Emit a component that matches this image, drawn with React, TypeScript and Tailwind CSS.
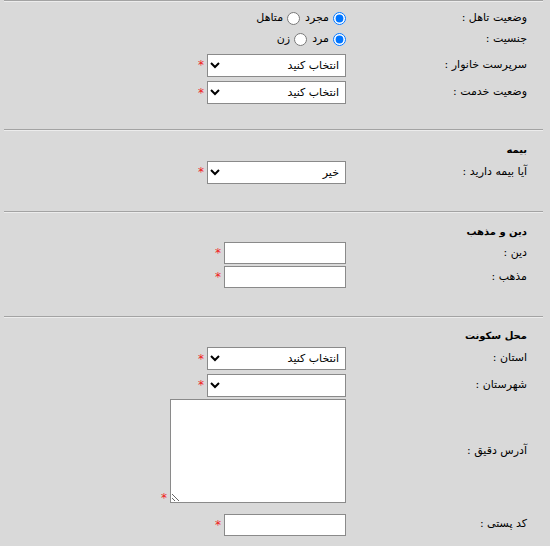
import React from 'react';

const font = { fontFamily: 'Tahoma, "DejaVu Sans", sans-serif' };

function Star() {
  return <span className="text-[12px] leading-none text-[#f02020]">*</span>;
}

function Divider() {
  return <div className="h-0 border-t border-b border-t-[#a3a3a3] border-b-[#ececec]" />;
}

function Row({
  label,
  children,
  h = 'h-[26px]',
  end = false,
}: {
  label: string;
  children: React.ReactNode;
  h?: string;
  end?: boolean;
}) {
  return (
    <div className={`flex ${h}`}>
      <div className="flex w-[197px] shrink-0 items-center pr-[16px] text-[11px]">{label}</div>
      <div className={`flex gap-[3px] ${end ? 'items-end' : 'items-center'}`}>{children}</div>
    </div>
  );
}

function Select({ value }: { value?: string }) {
  return (
    <select
      className="h-[23px] w-[139px] border border-[#8a8a8a] bg-white pr-[2px] text-[11px] text-black"
      defaultValue={value ?? ''}
    >
      <option value={value ?? ''}>{value ?? ''}</option>
    </select>
  );
}

function TextInput() {
  return <input type="text" className="h-[22px] w-[122px] border border-[#8a8a8a] bg-white px-1 text-[11px]" />;
}

function Radios({ a, b, name }: { a: string; b: string; name: string }) {
  return (
    <div className="flex items-center text-[11px]">
      <label className="flex items-center gap-[4px]">
        <input type="radio" name={name} defaultChecked className="m-0 h-[13px] w-[13px]" />
        <span>{a}</span>
      </label>
      <label className="mr-[5px] flex items-center gap-[4px]">
        <input type="radio" name={name} className="m-0 h-[13px] w-[13px]" />
        <span>{b}</span>
      </label>
    </div>
  );
}

function Header({ text }: { text: string }) {
  return (
    <div className="flex h-[20px] items-center pr-[16px] text-[10px] font-bold">{text}</div>
  );
}

export default function App() {
  return (
    <div dir="rtl" className="min-h-[546px] w-[550px] bg-[#d9d9d9] text-black" style={font}>
      <div className="pl-[4px] pr-[7px]">
        <Divider />
        <div className="pt-[6px] pb-[24px]">
          <Row label="وضعیت تاهل :" h="h-[20px]">
            <Radios name="marital" a="مجرد" b="متاهل" />
          </Row>
          <Row label="جنسیت :" h="h-[22px]">
            <Radios name="gender" a="مرد" b="زن" />
          </Row>
          <Row label="سرپرست خانوار :" h="h-[30px]">
            <Select value="انتخاب کنید" />
            <Star />
          </Row>
          <Row label="وضعیت خدمت :" h="h-[25px]">
            <Select value="انتخاب کنید" />
            <Star />
          </Row>
        </div>

        <Divider />
        <div className="pt-[8px] pb-[26px]">
          <Header text="بیمه" />
          <Row label="آیا بیمه دارید :">
            <Select value="خیر" />
            <Star />
          </Row>
        </div>

        <Divider />
        <div className="pt-[8px] pb-[27px]">
          <Header text="دین و مذهب" />
          <Row label="دین :" h="h-[24px]">
            <TextInput />
            <Star />
          </Row>
          <Row label="مذهب :" h="h-[24px]">
            <TextInput />
            <Star />
          </Row>
        </div>

        <Divider />
        <div className="pt-[7px] pb-[10px]">
          <Header text="محل سکونت" />
          <Row label="استان :" h="h-[27px]">
            <Select value="انتخاب کنید" />
            <Star />
          </Row>
          <Row label="شهرستان :" h="h-[26px]">
            <Select />
            <Star />
          </Row>
          <Row label="آدرس دقیق :" h="h-[106px]" end>
            <textarea className="mb-[1px] h-[104px] w-[176px] border border-[#8a8a8a] bg-white p-1 text-[11px]" />
            <Star />
          </Row>
          <Row label="کد پستی :" h="h-[41px]">
            <TextInput />
            <Star />
          </Row>
        </div>
      </div>
    </div>
  );
}
